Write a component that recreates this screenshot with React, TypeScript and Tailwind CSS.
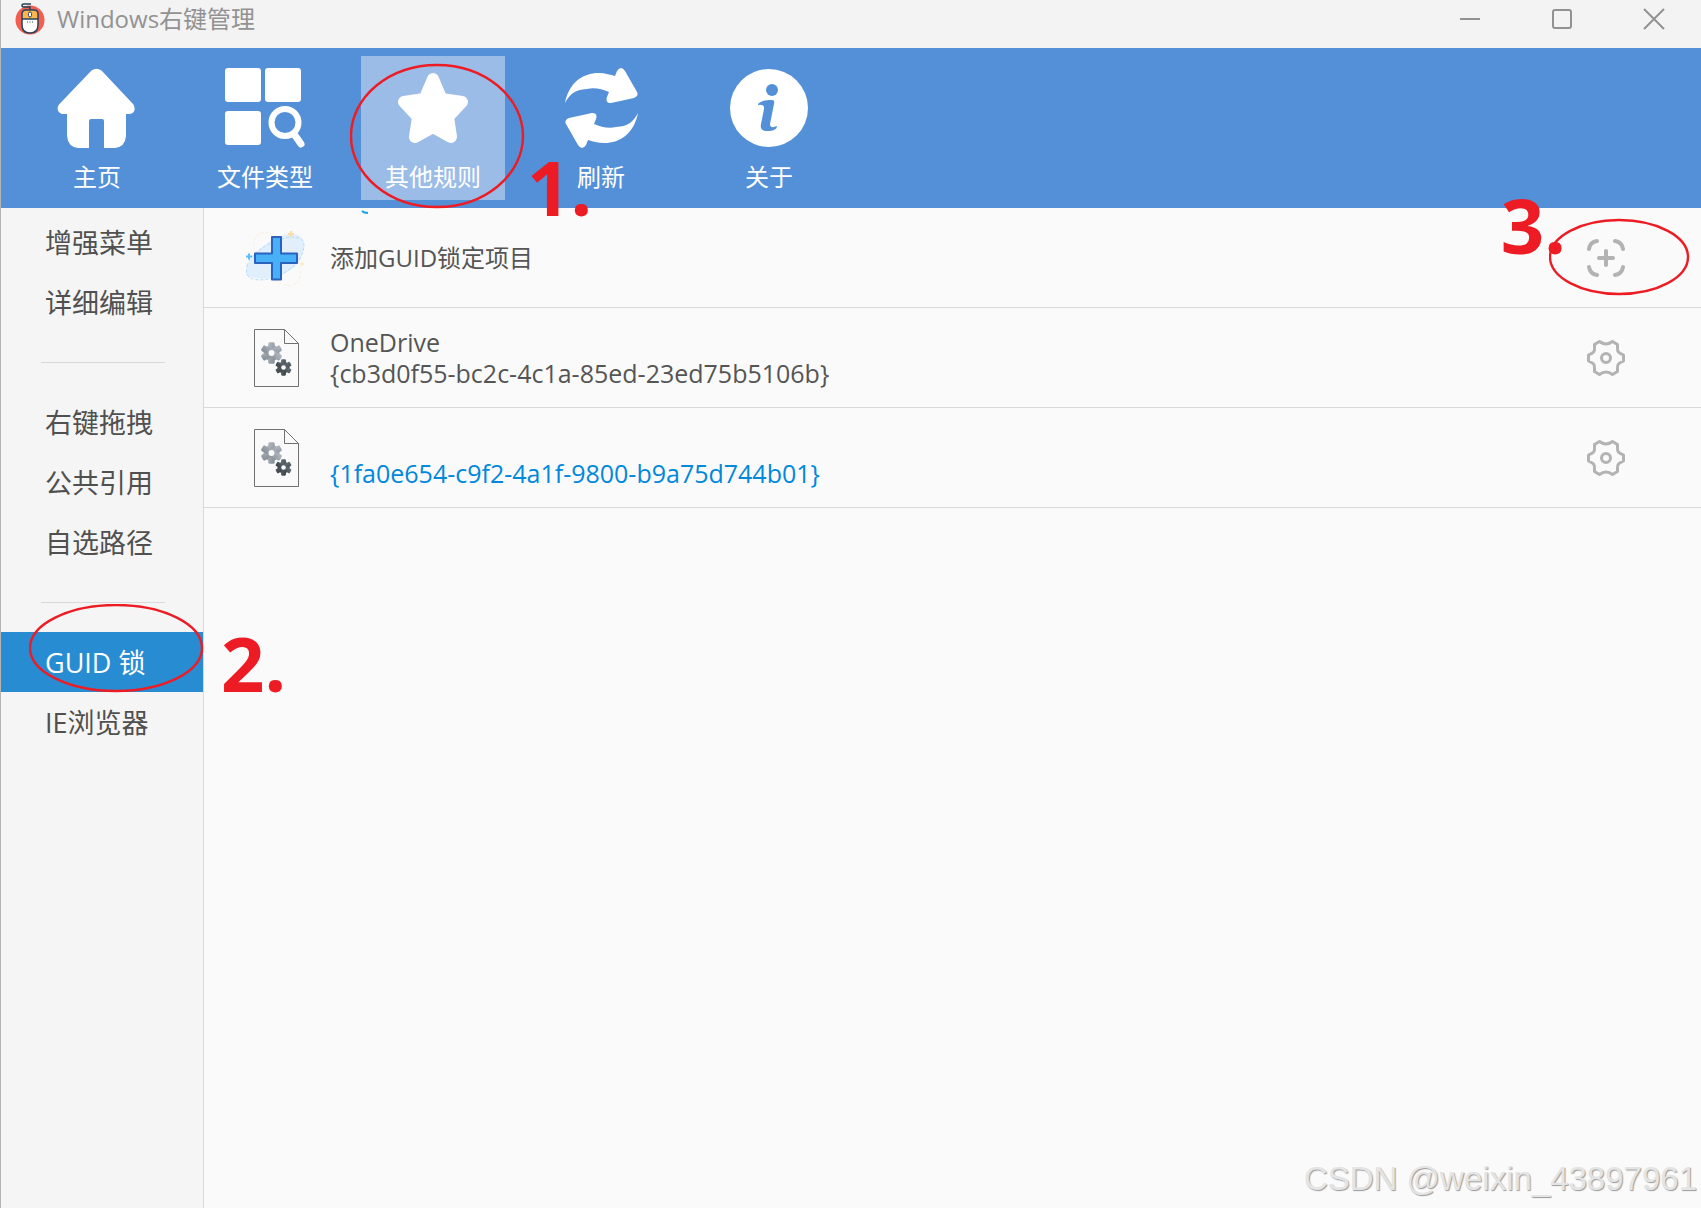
import React from "react";

const RED = "#ed1c24";

const HomeIcon = () => (
  <svg width="80" height="80" viewBox="1 0 80 80" fill="#fff">
    <path d="M35.500 2.500 Q40.500 -1 45.500 2.500 L77.500 36.500 Q81 44 74 46 H70 V68 Q69 79 59 80 H48 V53 Q48 51 46 51 H35 Q33 51 33 53 V80 H22 Q12 79 11 68 V46 H6 Q-1 43 3 36.500 Z" />
  </svg>
);

const FileTypeIcon = () => (
  <svg width="80" height="80" viewBox="1 -1 80 80" fill="#fff">
    <rect x="1" y="-1" width="36" height="34" rx="3" />
    <rect x="41" y="-1" width="36" height="34" rx="3" />
    <rect x="1" y="42" width="36" height="34" rx="3" />
    <circle cx="61" cy="53.500" r="13.500" fill="none" stroke="#fff" strokeWidth="6" />
    <path d="M70 65 L77 75" stroke="#fff" strokeWidth="7" strokeLinecap="round" />
  </svg>
);

const StarIcon = () => (
  <svg width="80" height="80" viewBox="0 -1 80 80" fill="#fff" stroke="#fff" strokeWidth="12" strokeLinejoin="round">
    <path d="M40 10 L48.500 30 L69 33 L55 48 L58 68 L40 58 L22 68 L25 48 L11 33 L31.500 30 Z" />
  </svg>
);

const arrow =
  "M3 34 C7 14 20 4 37 4 C43 4 49 6 53 7 L55 2 Q59 -4 63 2 L75 23 Q77 27 72 29 L49 34 Q43 34 45 28 L47 23 C40 20 32 18 25 20 C12 21 8 25 3 34 Z";

const RefreshIcon = () => (
  <svg width="80" height="80" viewBox="-1 -1 80 80" fill="#fff">
    <path d={arrow} />
    <path d={arrow} transform="rotate(180 39.500 39)" />
  </svg>
);

const InfoIcon = () => (
  <svg width="80" height="80" viewBox="0 0 80 80">
    <circle cx="40" cy="40" r="39" fill="#fff" />
    <circle cx="43" cy="22" r="6" fill="#5490d7" />
    <path
      d="M29 36 C33 32 39 32 43 32 Q46 32 45 36 L41 56 Q41 61 48 58 C48 62 43 63 39 63 C33 63 31 61 32 56 L35 41 Q36 36 29 37 Z"
      fill="#5490d7"
    />
  </svg>
);

const AppLogo = () => (
  <svg width="32" height="36" viewBox="0 0 32 36">
    <circle cx="16" cy="20" r="14.500" fill="#f25e50" />
    <path d="M8 19 V14 Q8 10 12 10 H20 Q24 10 24 14 V19 Z" fill="#fdb64d" />
    <path d="M8 19 H24 V25 Q24 33 16 33 Q8 33 8 25 Z" fill="#fff" />
    <path
      d="M8 14 Q8 10 12 10 H20 Q24 10 24 14 V25 Q24 33 16 33 Q8 33 8 25 Z M8 19 H24 M16 10 V7 H10 Q8 7 8 5.500 Q8 4 10 4 H17"
      fill="none"
      stroke="#27445c"
      strokeWidth="1.500"
    />
    <rect x="14.500" y="12" width="3" height="5" rx="1.500" fill="#fff" stroke="#27445c" />
    <path d="M13 22 H19" stroke="#27445c" strokeDasharray="1 1.500" />
  </svg>
);

const AddIcon = () => (
  <svg width="64" height="64" viewBox="0 0 64 64">
    <path d="M2 46 C2 30 30 8 46 8 C64 8 62 22 56 34 C48 48 26 55 12 52 C4 51 2 50 2 46 Z" fill="#e1effc" />
    <path
      d="M3 40 C6 26 32 12 48 11 C62 11 63 20 55 34 C46 47 24 57 9 53 C2 51 2 46 3 40 Z"
      fill="none"
      stroke="#b4dcfb"
      strokeDasharray="3 2"
    />
    <ellipse cx="33" cy="33" rx="31" ry="17" transform="rotate(52 33 33)" fill="none" stroke="#faeedb" strokeDasharray="3 2" />
    <path d="M5 27.500 v6 M2 30.500 h6" stroke="#5cbdf8" strokeWidth="2" />
    <path d="M47 5 v6 M44 8 h6" stroke="#f9dfa6" strokeWidth="2" />
    <path d="M58 36 v4 M56 38 h4" stroke="#f9e3b4" />
    <path
      d="M28 11 H37 V27.500 H53 V37 H37 V53.500 H28 V37 H11 V27.500 H28 Z"
      fill="#48b0f7"
      stroke="#2b62bd"
      strokeWidth="2"
      strokeLinejoin="round"
    />
  </svg>
);

const Gear = ({ x, y, size, color }: { x: number; y: number; size: number; color: string }) => (
  <g transform={`translate(${x} ${y}) scale(${size})`} fill={color}>
    <circle r="8" />
    {[0, 60, 120].map((deg) => (
      <rect key={deg} x="-3.200" y="-10.700" width="6.400" height="21.400" rx="1.500" transform={`rotate(${deg})`} />
    ))}
    <circle r="3" fill="#fafafa" />
  </g>
);

const DllIcon = () => (
  <svg width="46" height="59" viewBox="0 -1 46 59">
    <defs>
      <linearGradient id="light" x1="0" y1="0" x2="1" y2="1">
        <stop offset="0" stopColor="#b0b8c1" />
        <stop offset="1" stopColor="#868d95" />
      </linearGradient>
      <linearGradient id="dark" x1="0" y1="0" x2="1" y2="1">
        <stop offset="0" stopColor="#64737a" />
        <stop offset="1" stopColor="#3a3f43" />
      </linearGradient>
    </defs>
    <path d="M0.500 0.500 H30.500 L44.500 14.500 V57.500 H0.500 Z M30.500 0.500 V14.500 H44.500" fill="#fafafa" stroke="#707070" />
    <Gear x={17.5} y={24} size={1} color="url(#light)" />
    <Gear x={29.5} y={38.5} size={0.76} color="url(#dark)" />
  </svg>
);

const ScanPlusIcon = () => (
  <svg width="40" height="40" viewBox="0 0 40 40" fill="none" stroke="#b3b3b3" strokeWidth="4" strokeLinecap="round">
    <path d="M3 11 Q4 4 11 3 M29 3 Q36 4 37 11 M37 29 Q36 36 29 37 M11 37 Q4 36 3 29 M20 13 V27 M13 20 H27" />
  </svg>
);

const SettingIcon = () => (
  <svg width="40" height="40" viewBox="0 0 40 40" fill="none" stroke="#b3b3b3" strokeWidth="3" strokeLinejoin="round">
    <path d="M13.500 3.500 Q20 8.500 26.500 3.500 L31.500 6.500 V9.500 C31 14 33 15 37.500 17 V23 C33 25 31 26 31.500 30.500 V33.500 L26.500 36.500 Q20 31.500 13.500 36.500 L8.500 33.500 V30.500 C9 26 7 25 2.500 23 V17 C7 15 9 14 8.500 9.500 V6.500 Z" />
    <circle cx="20" cy="20" r="4.500" />
  </svg>
);

const tabs = [
  { label: "主页", icon: <HomeIcon /> },
  { label: "文件类型", icon: <FileTypeIcon /> },
  { label: "其他规则", icon: <StarIcon />, active: true },
  { label: "刷新", icon: <RefreshIcon /> },
  { label: "关于", icon: <InfoIcon /> },
];

const menu = ["增强菜单", "详细编辑", "-", "右键拖拽", "公共引用", "自选路径", "-", "GUID 锁", "IE浏览器"];

const rows = [
  { name: "OneDrive", guid: "{cb3d0f55-bc2c-4c1a-85ed-23ed75b5106b}", color: "text-[#555]" },
  { name: "", guid: "{1fa0e654-c9f2-4a1f-9800-b9a75d744b01}", color: "text-[#0088dc]" },
];

const App: React.FC = () => {
  return (
    <div className="relative min-h-screen flex flex-col overflow-hidden border-l border-[#b4b4b4] bg-[#fafafa] font-['Open_Sans','Noto_Sans_CJK_SC',sans-serif]">
      {/* title bar */}
      <header className="h-12 flex justify-between bg-[#f3f3f3]">
        <div className="flex items-start pl-[13px] gap-[11px]">
          <AppLogo />
          <h1 className="text-2xl leading-[38px] text-[#929292]">Windows右键管理</h1>
        </div>
        <div className="flex items-start pt-2 pr-9 gap-[70px] text-[#929292]">
          <button aria-label="Minimize">
            <svg width="22" height="22" fill="none" stroke="currentColor" strokeWidth="2">
              <path d="M1 11 H21" />
            </svg>
          </button>
          <button aria-label="Maximize">
            <svg width="22" height="22" fill="none" stroke="currentColor" strokeWidth="2">
              <rect x="2" y="2" width="18" height="18" rx="2" />
            </svg>
          </button>
          <button aria-label="Close">
            <svg width="22" height="22" fill="none" stroke="currentColor" strokeWidth="2">
              <path d="M1 1 L21 21 M21 1 L1 21" />
            </svg>
          </button>
        </div>
      </header>

      {/* toolbar */}
      <nav className="h-40 flex gap-6 px-6 py-2 bg-[#5490d7]">
        {tabs.map((tab) => (
          <button
            key={tab.label}
            className={`w-36 flex flex-col items-center pt-3 gap-[13px] text-white text-2xl ${tab.active ? "bg-[#9bbce7]" : ""}`}
          >
            {tab.icon}
            <span className="leading-8">{tab.label}</span>
          </button>
        ))}
      </nav>

      <div className="flex-1 flex">
        {/* side menu */}
        <aside className="w-[203px] shrink-0 pt-1 bg-[#f5f5f5] border-r border-[#d9d9d9]">
          {menu.map((item, i) =>
            item === "-" ? (
              <div key={i} className="h-15 pl-10 pr-[38px] flex items-center">
                <hr className="w-full border-[#d9d9d9]" />
              </div>
            ) : (
              <button
                key={i}
                className={`w-full h-15 pl-11 pt-0.5 text-left text-[27px] ${
                  item === "GUID 锁" ? "bg-[#288cd3] text-white" : "text-[#505050]"
                }`}
              >
                {item}
              </button>
            )
          )}
        </aside>

        {/* guid list */}
        <main className="flex-1 text-2xl text-[#555]">
          <div className="h-[100px] flex items-center pl-10 pr-[75px] border-b border-[#d9d9d9]">
            <AddIcon />
            <span className="flex-1 pl-[22px]">添加GUID锁定项目</span>
            <button aria-label="添加">
              <ScanPlusIcon />
            </button>
          </div>
          {rows.map((row) => (
            <div key={row.guid} className="h-[100px] flex items-center pl-[50px] pr-[75px] border-b border-[#d9d9d9]">
              <DllIcon />
              <div className={`flex-1 pl-[30px] text-[25px] leading-[31px] ${row.color}`}>
                <p className="h-[31px]">{row.name}</p>
                <p>{row.guid}</p>
              </div>
              <button aria-label="设置">
                <SettingIcon />
              </button>
            </div>
          ))}
        </main>
      </div>

      {/* hand drawn marks */}
      <svg className="absolute left-[349px] top-[63px] pointer-events-none" width="176" height="146" fill="none" stroke={RED} strokeWidth="2.400">
        <ellipse cx="87" cy="73" rx="86" ry="71" />
      </svg>
      <svg className="absolute left-[28px] top-[604px] pointer-events-none" width="176" height="90" fill="none" stroke={RED} strokeWidth="2.400">
        <ellipse cx="87" cy="44" rx="86" ry="43" />
      </svg>
      <svg className="absolute right-[10px] top-[218px] pointer-events-none" width="142" height="78" fill="none" stroke={RED} strokeWidth="2.400">
        <ellipse cx="70" cy="39" rx="69" ry="37" />
      </svg>
      <svg className="absolute left-[360px] top-[209px]" width="8" height="6" fill="none" stroke="#12a5e8" strokeWidth="2">
        <path d="M1 2 Q3 4 7 4" />
      </svg>
      <span className="absolute left-[526px] top-[135px] text-[76px] leading-[104px] font-bold text-[#ed1c24]">1.</span>
      <span className="absolute left-[220px] top-[611px] text-[76px] leading-[104px] font-bold text-[#ed1c24]">2.</span>
      <span className="absolute right-[135px] top-[173px] text-[76px] leading-[104px] font-bold text-[#ed1c24]">3.</span>
      <span className="absolute right-1 bottom-2 text-[33px] leading-[42px] font-['Liberation_Sans',sans-serif] text-[#e4e4e4] [text-shadow:1px_1px_1px_#9a9a9a]">
        CSDN @weixin_43897961
      </span>
    </div>
  );
};

export default App;
